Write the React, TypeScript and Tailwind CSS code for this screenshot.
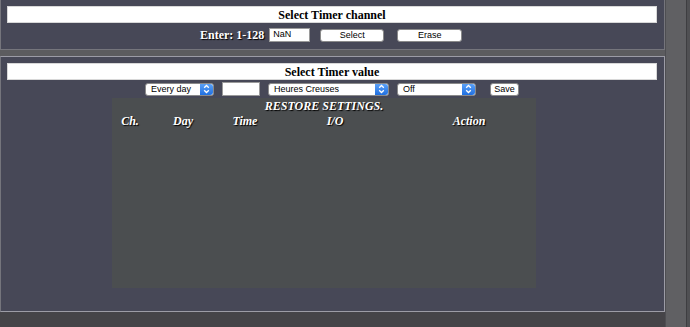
function Stepper() {
  return (
    <span className="flex h-full w-[13px] items-center justify-center rounded-r-[3px] bg-gradient-to-b from-[#5aa0f7] to-[#1f6fe0]">
      <svg width="7" height="10" viewBox="0 0 7 10">
        <path d="M1.2 3.8 L3.5 1.5 L5.8 3.8 M1.2 6.2 L3.5 8.5 L5.8 6.2" fill="none" stroke="#fff" strokeWidth="1.3" />
      </svg>
    </span>
  );
}

function Select({ label, width }: { label: string; width: string }) {
  return (
    <div className={`flex h-[13px] items-center justify-between rounded-[3px] border border-[#8a8a8a] bg-white pl-[5px] text-[9px] text-black ${width}`}>
      <span className="leading-none">{label}</span>
      <Stepper />
    </div>
  );
}

function Button({ label, width }: { label: string; width: string }) {
  return (
    <button className={`flex h-[13px] items-center justify-center rounded-[3px] border border-[#8a8a8a] bg-white text-[9px] leading-none text-black ${width}`}>
      {label}
    </button>
  );
}

function TitleBar({ text }: { text: string }) {
  return (
    <div className="mx-[6px] mr-[7px] flex h-[17px] items-center justify-center border border-[#d8d8d8] bg-white text-[12px] font-bold text-black">
      {text}
    </div>
  );
}

export default function App() {
  return (
    <div className="flex h-[327px] w-[690px] overflow-hidden bg-[#5c5c5f] [font-family:'Liberation_Sans',Arial,sans-serif]">
      {/* main column */}
      <div className="flex w-[665px] flex-col">
        {/* channel panel */}
        <section className="h-[50px] border border-t-0 border-[#75757c] bg-[#474857] pt-[6px] [font-family:'Liberation_Serif','Times_New_Roman',serif]">
          <TitleBar text="Select Timer channel" />
          <div className="mt-[3px] flex items-center">
            <span className="ml-[199px] text-[12px] font-bold text-white [text-shadow:1px_1px_1px_#000]">Enter: 1-128</span>
            <div className="ml-[5px] flex h-[14px] w-[41px] items-center border border-[#9a9a9a] bg-white pl-[3px] text-[9px] text-black [font-family:'Liberation_Sans',Arial,sans-serif]">
              NaN
            </div>
            <div className="ml-[10px] flex items-center gap-[13px] [font-family:'Liberation_Sans',Arial,sans-serif]">
              <Button label="Select" width="w-[64px]" />
              <Button label="Erase" width="w-[65px]" />
            </div>
          </div>
        </section>

        {/* value panel */}
        <section className="mt-[6px] flex h-[256px] flex-col border border-[#9c9ca6] border-l-[#75757c] bg-[#474857] pt-[6px] [font-family:'Liberation_Serif','Times_New_Roman',serif]">
          <TitleBar text="Select Timer value" />
          <div className="mt-[2px] flex items-center [font-family:'Liberation_Sans',Arial,sans-serif]">
            <div className="ml-[144px]">
              <Select label="Every day" width="w-[69px]" />
            </div>
            <div className="ml-[8px] h-[14px] w-[38px] border border-[#9a9a9a] bg-white" />
            <div className="ml-[8px]">
              <Select label="Heures Creuses" width="w-[121px]" />
            </div>
            <div className="ml-[8px]">
              <Select label="Off" width="w-[79px]" />
            </div>
            <div className="ml-[14px]">
              <Button label="Save" width="w-[29px]" />
            </div>
          </div>

          <div className="ml-[111px] mt-[2px] h-[190px] w-[424px] bg-[#4b4e50] text-white">
            <div className="pt-[1px] text-center text-[12px] font-bold italic leading-[14px] [text-shadow:1px_1px_1px_#000]">
              RESTORE SETTINGS.
            </div>
            <div className="mt-[1px] grid grid-cols-[36px_70px_54px_126px_138px] text-center text-[12px] font-bold italic leading-[14px] [text-shadow:1px_1px_1px_#000]">
              <span>Ch.</span>
              <span>Day</span>
              <span>Time</span>
              <span>I/O</span>
              <span className="pl-[4px]">Action</span>
            </div>
          </div>
        </section>

        {/* footer band */}
        <div className="flex-1 bg-[#454448]" />
      </div>

      {/* right strip */}
      <div className="flex flex-1 border-l border-[#4e4e52] bg-[#606063]">
        <div className="ml-auto w-[4px] border-l border-[#3e3e41] bg-[#505053]" />
      </div>
    </div>
  );
}
